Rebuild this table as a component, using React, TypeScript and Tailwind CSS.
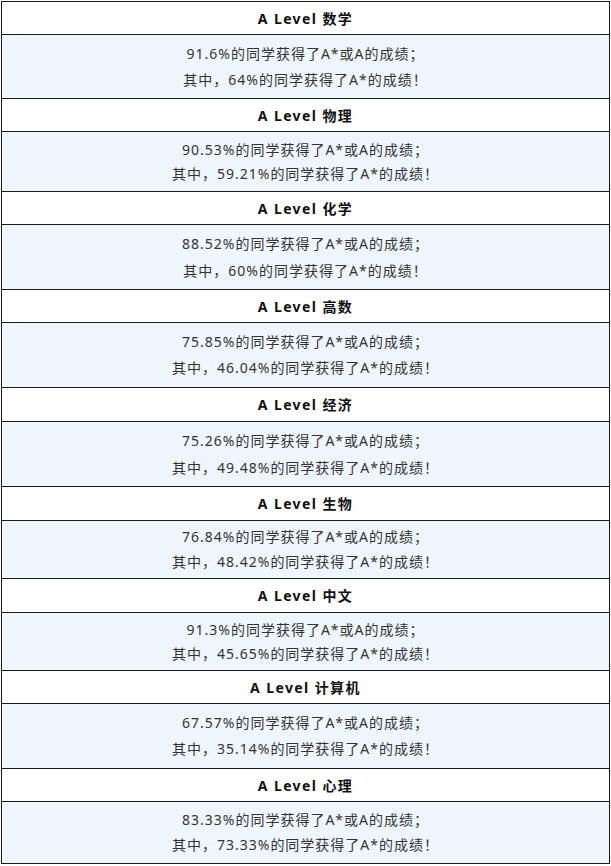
const rows = [
  { subject: '数学', all: '91.6%', top: '64%', h: 'h-[64px]', gap: 'gap-[8px]' },
  { subject: '物理', all: '90.53%', top: '59.21%', h: 'h-[60px]', gap: 'gap-[6px]' },
  { subject: '化学', all: '88.52%', top: '60%', h: 'h-[65px]', gap: 'gap-[9px]' },
  { subject: '高数', all: '75.85%', top: '46.04%', h: 'h-[65px]', gap: 'gap-[8px]' },
  { subject: '经济', all: '75.26%', top: '49.48%', h: 'h-[65px]', gap: 'gap-[9px]' },
  { subject: '生物', all: '76.84%', top: '48.42%', h: 'h-[58px]', gap: 'gap-[7px]' },
  { subject: '中文', all: '91.3%', top: '45.65%', h: 'h-[58px]', gap: 'gap-[6px]' },
  { subject: '计算机', all: '67.57%', top: '35.14%', h: 'h-[65px]', gap: 'gap-[8px]' },
  { subject: '心理', all: '83.33%', top: '73.33%', h: 'h-[62px]', gap: 'gap-[7px]' },
]

// first header has no top rule of its own, the rest carry a 1px border-t
const headerHeights = ['h-[32px]', 'h-[33px]', 'h-[33px]', 'h-[33px]', 'h-[34px]', 'h-[34px]', 'h-[34px]', 'h-[33px]', 'h-[33px]']

export default function App() {
  return (
    <div className="bg-white min-h-[866px] pt-px pl-px" style={{ fontFamily: '"Noto Sans", "Noto Sans CJK SC", sans-serif' }}>
      <div className="w-[609px] border border-[#1a1a1a]">
        {rows.map((r, i) => (
          <div key={r.subject}>
            <div className={`${headerHeights[i]} flex items-center justify-center bg-white text-[14px] font-bold tracking-[1.4px] text-[#111] ${i > 0 ? 'border-t border-[#1a1a1a]' : ''}`}>
              A Level {r.subject}
            </div>
            <div className={`${r.h} ${r.gap} flex flex-col items-center justify-center border-t border-[#1a1a1a] bg-[#eff6fe] text-[14px] leading-[18px] tracking-[1px] text-[#333]`}>
              <p>{r.all}的同学获得了A*或A的成绩；</p>
              <p>其中，{r.top}的同学获得了A*的成绩！</p>
            </div>
          </div>
        ))}
      </div>
    </div>
  )
}
